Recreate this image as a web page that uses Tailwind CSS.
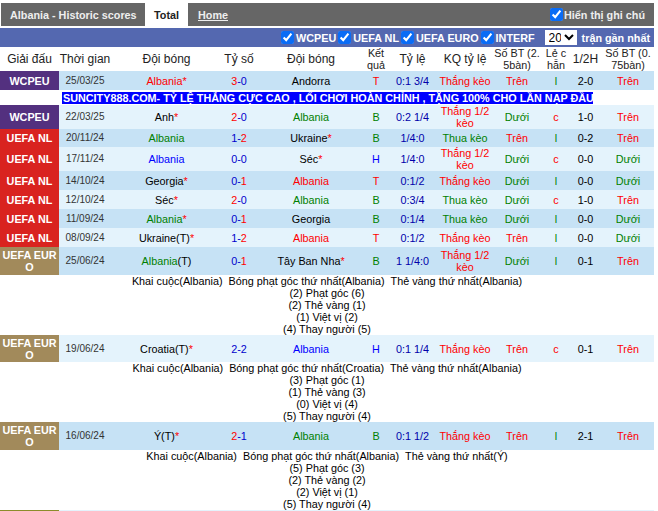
<!DOCTYPE html>
<html lang="vi">
<head>
  <meta charset="UTF-8" />
  <title>Albania - Historic scores</title>
  <script src="https://cdn.jsdelivr.net/npm/@tailwindcss/browser@4"></script>
</head>
<body class="h-[511px] w-[658px] overflow-hidden bg-white font-['Liberation_Sans',Arial,sans-serif] text-[10.8px] leading-[12px] text-black">
  <div class="w-[654px] pt-[3px]">
    <div class="ml-px flex h-[23px] items-stretch bg-[#666666] font-bold text-[#eeeeee]">
      <div class="flex w-[144px] items-center pl-[9px] whitespace-nowrap">Albania - Historic scores</div>
      <div class="flex w-[43px] items-center justify-center bg-white text-[#222222]">Total</div>
      <div class="flex items-center pl-[10px] underline">Home</div>
      <label class="ml-auto flex items-center gap-px pr-[9px]"><input type="checkbox" checked class="size-[13px] accent-[#0a6cf5]" />Hiển thị ghi chú</label>
    </div>
    <div class="mt-[2px] flex h-[19px] items-center justify-end gap-[2px] bg-[#5468b0] pr-[4px] font-bold text-white">
      <input type="checkbox" checked class="size-[13px] accent-[#0a6cf5]" /><span>WCPEU</span>
      <input type="checkbox" checked class="size-[13px] accent-[#0a6cf5]" /><span>UEFA NL</span>
      <input type="checkbox" checked class="size-[13px] accent-[#0a6cf5]" /><span>UEFA EURO</span>
      <input type="checkbox" checked class="size-[13px] accent-[#0a6cf5]" /><span class="mr-[8px]">INTERF</span>
      <select class="h-[15px] w-[32px] bg-white text-[12px] font-normal text-black"><option>20</option></select>
      <span class="ml-[3px]">trận gần nhất</span>
    </div>
    <table class="w-[654px] table-fixed border-collapse text-center [&_td]:p-0 [&_th]:p-0 [&_th]:text-[12px] [&_th]:font-normal">
      <colgroup>
        <col class="w-[59px]" /><col class="w-[52px]" /><col class="w-[111px]" /><col class="w-[34px]" /><col class="w-[110px]" /><col class="w-[20px]" /><col class="w-[53px]" /><col class="w-[52px]" /><col class="w-[52px]" /><col class="w-[26px]" /><col class="w-[33px]" /><col class="w-[52px]" />
      </colgroup>
      <tr class="h-[24px] text-[#222222]">
        <th>Giải đấu</th><th>Thời gian</th><th>Đội bóng</th><th>Tỷ số</th><th>Đội bóng</th><th><span class="text-[10.8px]">Kết<br />quả</span></th><th>Tỷ lệ</th><th>KQ tỷ lệ</th><th class="whitespace-nowrap"><span class="text-[10.8px]">Số BT (2.<br />5bàn)</span></th><th><span class="text-[10.8px]">Lẻ c<br />hẵn</span></th><th>1/2H</th><th class="whitespace-nowrap"><span class="text-[10.8px]">Số BT (0.<br />75bàn)</span></th>
      </tr>

      <tr class="h-[19px] bg-[#c6e2f5]">
        <td class="bg-[#53307f] font-bold text-white">WCPEU</td><td class="text-[10px] text-[#333333]">25/03/25</td>
        <td class="text-[#ff0000]">Albania*</td><td><span class="text-[#ff0000]">3</span><span class="text-[#0000cc]">-0</span></td><td>Andorra</td>
        <td class="text-[#ff0000]">T</td><td class="text-[#0000aa]">0:1 3/4</td><td class="text-[#ff0000]">Thắng kèo</td><td class="text-[#ff0000]">Trên</td><td class="text-[#008000]">l</td><td>2-0</td><td class="text-[#ff0000]">Trên</td>
      </tr>
      <tr class="h-[15px]">
        <td colspan="12" class="text-left"><span class="mt-[2px] mb-px ml-[62px] block h-[12px] w-[531px] overflow-hidden bg-[#0000ff] pl-px font-bold whitespace-nowrap text-white">SUNCITY888.COM- TỶ LỆ THẮNG CỰC CAO , LỐI CHƠI HOÀN CHỈNH , TẶNG 100% CHO LẦN NẠP ĐẦU</span></td>
      </tr>
      <tr class="h-[24px] bg-[#e4f3fc]">
        <td class="bg-[#53307f] font-bold text-white">WCPEU</td><td class="text-[10px] text-[#333333]">22/03/25</td>
        <td>Anh<span class="text-[#ff0000]">*</span></td><td><span class="text-[#ff0000]">2</span><span class="text-[#0000cc]">-0</span></td><td class="text-[#008000]">Albania</td>
        <td class="text-[#008000]">B</td><td class="text-[#0000aa]">0:2 1/4</td><td class="text-[#ff0000]">Thắng 1/2 kèo</td><td class="text-[#008000]">Dưới</td><td class="text-[#ff0000]">c</td><td>1-0</td><td class="text-[#ff0000]">Trên</td>
      </tr>
      <tr class="h-[18px] bg-[#c6e2f5]">
        <td class="bg-[#d9231f] font-bold text-white">UEFA NL</td><td class="text-[10px] text-[#333333]">20/11/24</td>
        <td class="text-[#008000]">Albania</td><td><span class="text-[#0000cc]">1-</span><span class="text-[#ff0000]">2</span></td><td>Ukraine<span class="text-[#ff0000]">*</span></td>
        <td class="text-[#008000]">B</td><td class="text-[#0000aa]">1/4:0</td><td class="text-[#008000]">Thua kèo</td><td class="text-[#ff0000]">Trên</td><td class="text-[#008000]">l</td><td>0-2</td><td class="text-[#ff0000]">Trên</td>
      </tr>
      <tr class="h-[24px] bg-[#e4f3fc]">
        <td class="bg-[#d9231f] font-bold text-white">UEFA NL</td><td class="text-[10px] text-[#333333]">17/11/24</td>
        <td class="text-[#0000ff]">Albania</td><td class="text-[#0000cc]">0-0</td><td>Séc<span class="text-[#ff0000]">*</span></td>
        <td class="text-[#0000ff]">H</td><td class="text-[#0000aa]">1/4:0</td><td class="text-[#ff0000]">Thắng 1/2 kèo</td><td class="text-[#008000]">Dưới</td><td class="text-[#ff0000]">c</td><td>0-0</td><td class="text-[#008000]">Dưới</td>
      </tr>
      <tr class="h-[19px] bg-[#c6e2f5]">
        <td class="bg-[#d9231f] font-bold text-white">UEFA NL</td><td class="text-[10px] text-[#333333]">14/10/24</td>
        <td>Georgia<span class="text-[#ff0000]">*</span></td><td><span class="text-[#0000cc]">0-</span><span class="text-[#ff0000]">1</span></td><td class="text-[#ff0000]">Albania</td>
        <td class="text-[#ff0000]">T</td><td class="text-[#0000aa]">0:1/2</td><td class="text-[#ff0000]">Thắng kèo</td><td class="text-[#008000]">Dưới</td><td class="text-[#008000]">l</td><td>0-0</td><td class="text-[#008000]">Dưới</td>
      </tr>
      <tr class="h-[19px] bg-[#e4f3fc]">
        <td class="bg-[#d9231f] font-bold text-white">UEFA NL</td><td class="text-[10px] text-[#333333]">12/10/24</td>
        <td>Séc<span class="text-[#ff0000]">*</span></td><td><span class="text-[#ff0000]">2</span><span class="text-[#0000cc]">-0</span></td><td class="text-[#008000]">Albania</td>
        <td class="text-[#008000]">B</td><td class="text-[#0000aa]">0:3/4</td><td class="text-[#008000]">Thua kèo</td><td class="text-[#008000]">Dưới</td><td class="text-[#ff0000]">c</td><td>1-0</td><td class="text-[#ff0000]">Trên</td>
      </tr>
      <tr class="h-[19px] bg-[#c6e2f5]">
        <td class="bg-[#d9231f] font-bold text-white">UEFA NL</td><td class="text-[10px] text-[#333333]">11/09/24</td>
        <td class="text-[#008000]">Albania<span class="text-[#ff0000]">*</span></td><td><span class="text-[#0000cc]">0-</span><span class="text-[#ff0000]">1</span></td><td>Georgia</td>
        <td class="text-[#008000]">B</td><td class="text-[#0000aa]">0:1/4</td><td class="text-[#008000]">Thua kèo</td><td class="text-[#008000]">Dưới</td><td class="text-[#008000]">l</td><td>0-0</td><td class="text-[#008000]">Dưới</td>
      </tr>
      <tr class="h-[19px] bg-[#e4f3fc]">
        <td class="bg-[#d9231f] font-bold text-white">UEFA NL</td><td class="text-[10px] text-[#333333]">08/09/24</td>
        <td>Ukraine(T)<span class="text-[#ff0000]">*</span></td><td><span class="text-[#0000cc]">1-</span><span class="text-[#ff0000]">2</span></td><td class="text-[#ff0000]">Albania</td>
        <td class="text-[#ff0000]">T</td><td class="text-[#0000aa]">0:1/2</td><td class="text-[#ff0000]">Thắng kèo</td><td class="text-[#ff0000]">Trên</td><td class="text-[#008000]">l</td><td>0-0</td><td class="text-[#008000]">Dưới</td>
      </tr>
      <tr class="h-[28px] bg-[#c6e2f5]">
        <td class="bg-[#a28a5b] font-bold break-all text-white">UEFA EUR O</td><td class="text-[10px] text-[#333333]">25/06/24</td>
        <td><span class="text-[#008000]">Albania</span>(T)</td><td><span class="text-[#0000cc]">0-</span><span class="text-[#ff0000]">1</span></td><td>Tây Ban Nha<span class="text-[#ff0000]">*</span></td>
        <td class="text-[#008000]">B</td><td class="text-[#0000aa]">1 1/4:0</td><td class="text-[#ff0000]">Thắng 1/2 kèo</td><td class="text-[#008000]">Dưới</td><td class="text-[#008000]">l</td><td>0-1</td><td class="text-[#ff0000]">Trên</td>
      </tr>
      <tr class="h-[60px]">
        <td colspan="12"><span class="mx-[1.5px]">Khai cuộc(Albania)</span> <span class="mx-[1.5px]">Bóng phạt góc thứ nhất(Albania)</span> <span class="mx-[1.5px]">Thẻ vàng thứ nhất(Albania)</span><br />(2) Phạt góc (6)<br />(2) Thẻ vàng (1)<br />(1) Việt vị (2)<br />(4) Thay người (5)</td>
      </tr>
      <tr class="h-[27px] bg-[#e4f3fc]">
        <td class="bg-[#a28a5b] font-bold break-all text-white">UEFA EUR O</td><td class="text-[10px] text-[#333333]">19/06/24</td>
        <td>Croatia(T)<span class="text-[#ff0000]">*</span></td><td class="text-[#0000cc]">2-2</td><td class="text-[#0000ff]">Albania</td>
        <td class="text-[#0000ff]">H</td><td class="text-[#0000aa]">0:1 1/4</td><td class="text-[#ff0000]">Thắng kèo</td><td class="text-[#ff0000]">Trên</td><td class="text-[#ff0000]">c</td><td>0-1</td><td class="text-[#ff0000]">Trên</td>
      </tr>
      <tr class="h-[60px]">
        <td colspan="12"><span class="mx-[1.5px]">Khai cuộc(Albania)</span> <span class="mx-[1.5px]">Bóng phạt góc thứ nhất(Croatia)</span> <span class="mx-[1.5px]">Thẻ vàng thứ nhất(Albania)</span><br />(3) Phạt góc (1)<br />(1) Thẻ vàng (3)<br />(0) Việt vị (4)<br />(5) Thay người (4)</td>
      </tr>
      <tr class="h-[28px] bg-[#c6e2f5]">
        <td class="bg-[#a28a5b] font-bold break-all text-white">UEFA EUR O</td><td class="text-[10px] text-[#333333]">16/06/24</td>
        <td>Ý(T)<span class="text-[#ff0000]">*</span></td><td><span class="text-[#ff0000]">2</span><span class="text-[#0000cc]">-1</span></td><td class="text-[#008000]">Albania</td>
        <td class="text-[#008000]">B</td><td class="text-[#0000aa]">0:1 1/2</td><td class="text-[#ff0000]">Thắng kèo</td><td class="text-[#ff0000]">Trên</td><td class="text-[#008000]">l</td><td>2-1</td><td class="text-[#ff0000]">Trên</td>
      </tr>
      <tr class="h-[60px]">
        <td colspan="12"><span class="mx-[1.5px]">Khai cuộc(Albania)</span> <span class="mx-[1.5px]">Bóng phạt góc thứ nhất(Albania)</span> <span class="mx-[1.5px]">Thẻ vàng thứ nhất(Ý)</span><br />(5) Phạt góc (3)<br />(2) Thẻ vàng (2)<br />(2) Việt vị (1)<br />(5) Thay người (4)</td>
      </tr>
    </table>
    <div class="flex h-px bg-[#e4f3fc]"><div class="w-[59px] bg-[#8c8c2a]"></div></div>
  </div>
</body>
</html>
